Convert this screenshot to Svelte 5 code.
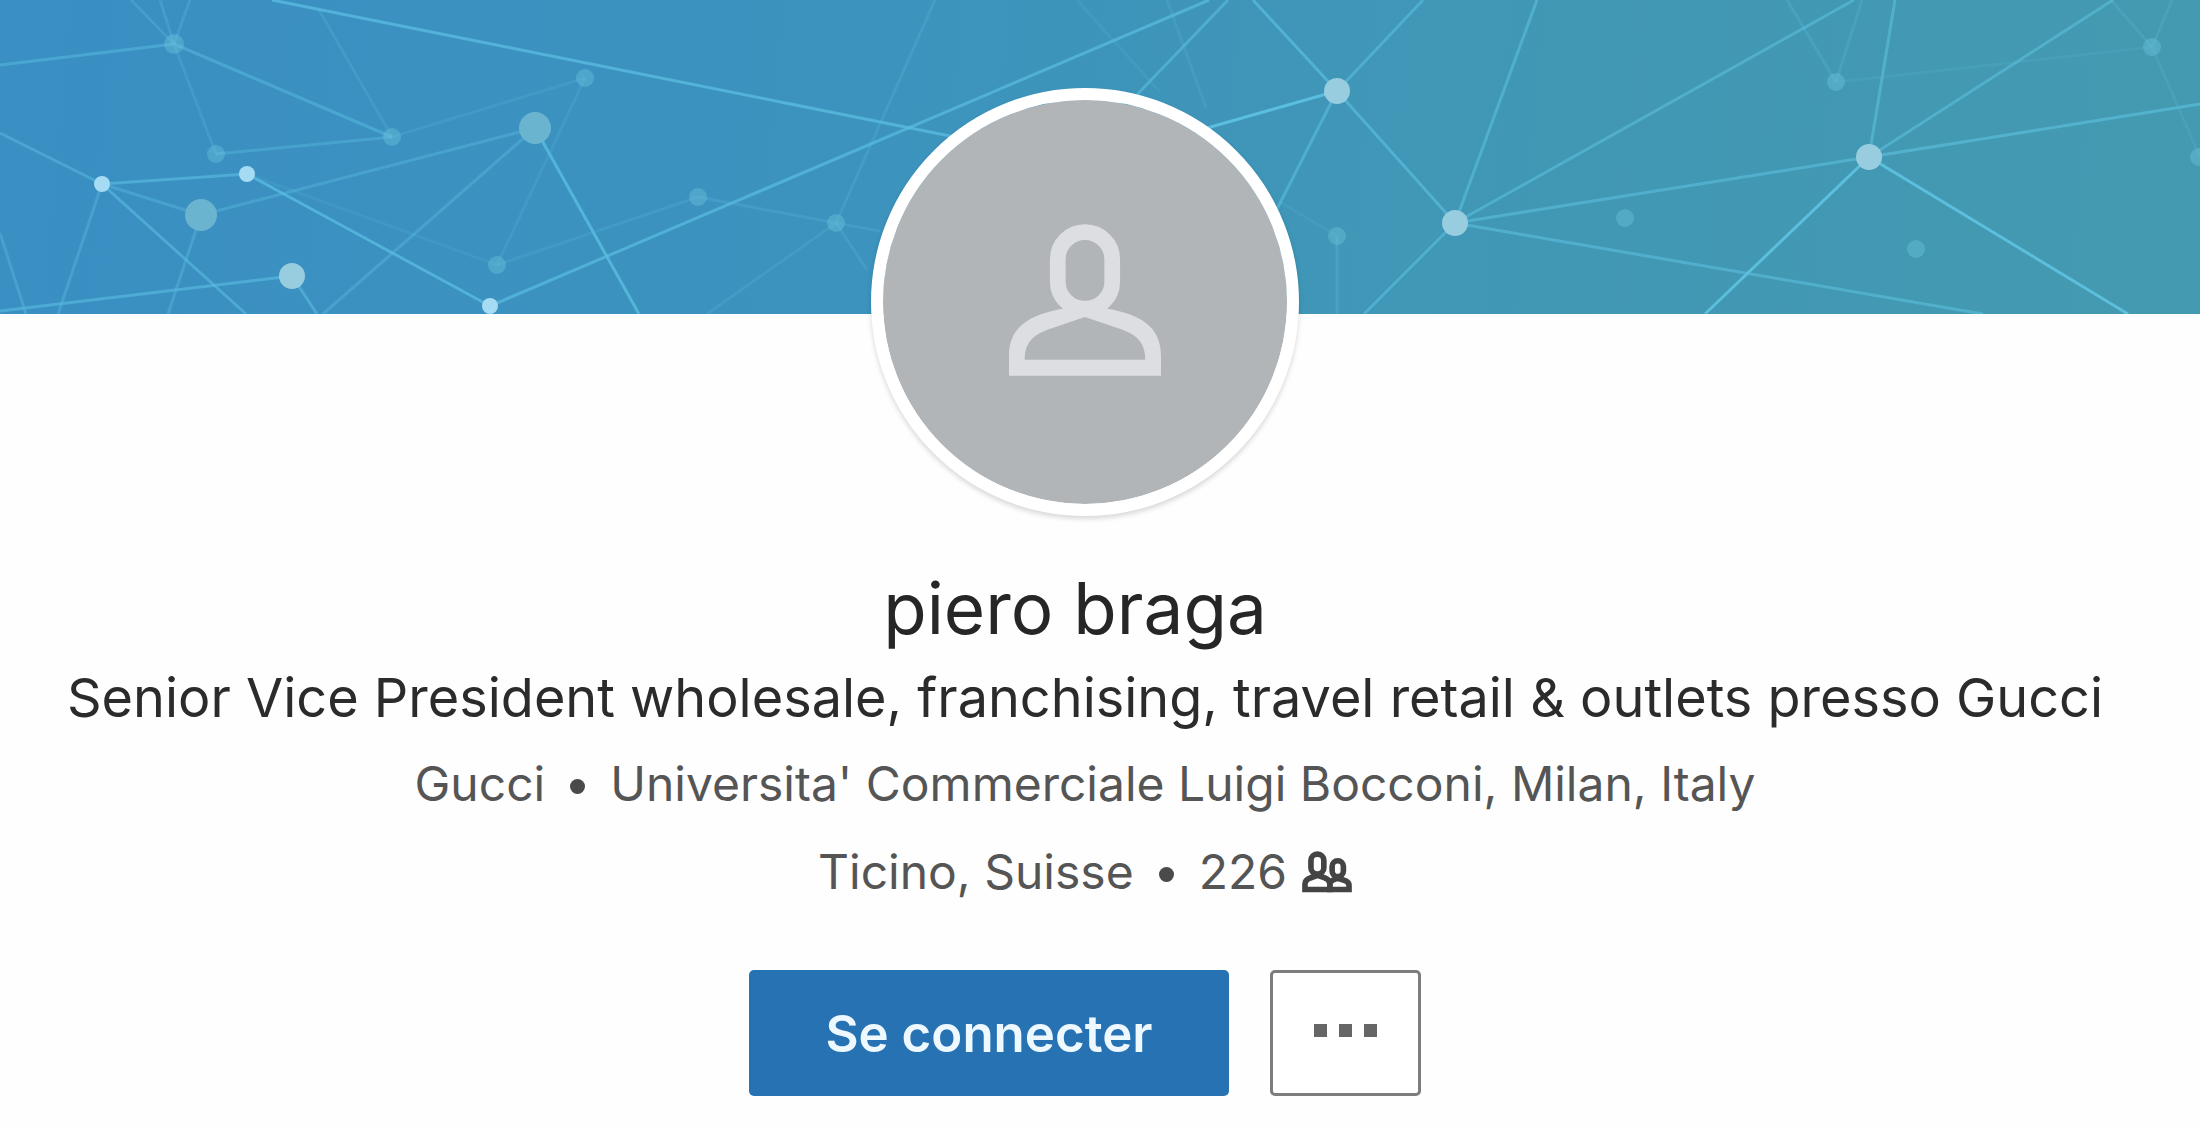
<script>
    const profile = {
        name: "piero braga",
        headline:
            "Senior Vice President wholesale, franchising, travel retail & outlets presso Gucci",
        company: "Gucci",
        school: "Universita' Commerciale Luigi Bocconi, Milan, Italy",
        location: "Ticino, Suisse",
        connections: 226,
    };

    // x1, y1, x2, y2, opacity
    const lines = [
        [0, 65, 174, 44, 0.5],
        [131, 0, 174, 44, 0.3],
        [160, 0, 174, 44, 0.3],
        [190, 0, 174, 44, 0.3],
        [174, 44, 216, 154, 0.25],
        [174, 44, 392, 137, 0.5],
        [216, 154, 392, 137, 0.4],
        [319, 10, 392, 137, 0.25],
        [392, 137, 585, 78, 0.2],
        [272, 0, 960, 138, 0.75],
        [0, 133, 102, 184, 0.5],
        [102, 184, 247, 174, 0.6],
        [102, 184, 201, 215, 0.4],
        [102, 184, 58, 314, 0.4],
        [102, 184, 246, 314, 0.6],
        [201, 215, 535, 128, 0.4],
        [201, 215, 168, 314, 0.4],
        [0, 311, 292, 276, 0.6],
        [292, 276, 317, 314, 0.6],
        [535, 128, 323, 314, 0.4],
        [535, 128, 639, 314, 0.8],
        [247, 174, 490, 306, 0.75],
        [247, 174, 497, 265, 0.15],
        [585, 78, 497, 265, 0.2],
        [497, 265, 698, 197, 0.2],
        [698, 197, 836, 223, 0.25],
        [836, 223, 880, 231, 0.25],
        [836, 223, 707, 314, 0.2],
        [836, 223, 867, 270, 0.25],
        [836, 223, 935, 0, 0.25],
        [490, 306, 1209, 0, 0.7],
        [0, 233, 26, 314, 0.4],
        [1228, 0, 1130, 102, 0.6],
        [1077, 0, 1160, 92, 0.15],
        [1167, 0, 1206, 108, 0.2],
        [1253, 0, 1337, 91, 0.7],
        [1423, 0, 1337, 91, 0.6],
        [1200, 130, 1337, 91, 1],
        [1275, 213, 1337, 91, 0.6],
        [1337, 91, 1455, 223, 0.65],
        [1455, 223, 1537, 0, 0.6],
        [1455, 223, 1854, 0, 0.6],
        [1455, 223, 1869, 157, 0.6],
        [1455, 223, 1983, 314, 0.6],
        [1455, 223, 1364, 314, 0.6],
        [1337, 236, 1337, 314, 0.3],
        [1337, 236, 1280, 202, 0.15],
        [1869, 157, 1895, 0, 0.6],
        [1869, 157, 2113, 0, 0.6],
        [1869, 157, 2200, 104, 0.65],
        [1869, 157, 1705, 314, 1],
        [1869, 157, 2128, 314, 1],
        [1836, 82, 1787, 0, 0.25],
        [1836, 82, 1862, 0, 0.25],
        [1836, 82, 2152, 47, 0.15],
        [2152, 47, 2111, 0, 0.25],
        [2152, 47, 2172, 0, 0.25],
        [2152, 47, 2200, 157, 0.2],
    ];

    // x, y, radius, tone
    const nodes = [
        [174, 44, 10, "faint"],
        [392, 137, 9, "faint"],
        [216, 154, 9, "faint"],
        [497, 265, 9, "faint"],
        [585, 78, 9, "faint"],
        [698, 197, 9, "faint"],
        [836, 223, 9, "faint"],
        [1337, 236, 9, "faint"],
        [1625, 218, 9, "faint"],
        [1836, 82, 9, "faint"],
        [1916, 249, 9, "faint"],
        [2152, 47, 9, "faint"],
        [2199, 157, 9, "faint"],
        [201, 215, 16, "mid"],
        [535, 128, 16, "mid"],
        [102, 184, 8, "bright"],
        [247, 174, 8, "bright"],
        [490, 306, 8, "bright"],
        [292, 276, 13, "light"],
        [1337, 91, 13, "light"],
        [1455, 223, 13, "light"],
        [1869, 157, 13, "light"],
    ];
</script>

<main class="card">
    <div class="banner">
        <svg viewBox="0 0 2200 314" preserveAspectRatio="xMidYMid slice" aria-hidden="true">
            <g class="links">
                {#each lines as [x1, y1, x2, y2, opacity]}
                    <line {x1} {y1} {x2} {y2} {opacity} />
                {/each}
            </g>
            {#each nodes as [cx, cy, r, tone]}
                <circle {cx} {cy} {r} class={tone} />
            {/each}
        </svg>
    </div>

    <div class="content">
        <div class="avatar">
            <svg viewBox="445 430 455 454" aria-hidden="true">
                <rect x="591" y="454" width="163" height="229" rx="81" />
                <path
                    d="M445 884V824C445 738 504 702 604 683L640 664H706L742 683C842 702 900 738 900 824V884ZM492 836H853C853 790 833 764 785 746L672 708L560 746C512 764 492 790 492 836Z"
                />
            </svg>
        </div>

        <h1>{profile.name}&nbsp;</h1>
        <h2>{profile.headline}</h2>
        <p class="meta">
            <span>{profile.company}</span>
            <span class="dot"></span>
            <span>{profile.school}</span>
        </p>
        <p class="meta">
            <span>{profile.location}</span>
            <span class="dot"></span>
            <span>{profile.connections}</span>
            <svg class="people" viewBox="65 80 151 126" aria-hidden="true">
                <rect x="92" y="89" width="39" height="60" rx="19" />
                <rect x="156" y="109" width="34" height="48" rx="17" />
                <path d="M74 196V180Q74 166 90 161L112 153L134 161Q149 166 149 180V196Z" />
                <path d="M149 196V176Q153 168 173 162L192 168Q207 172 207 184V196Z" />
            </svg>
        </p>

        <div class="actions">
            <button class="connect">Se connecter</button>
            <button class="more" aria-label="Plus">
                <i></i><i></i><i></i>
            </button>
        </div>
    </div>
</main>

<style>
    :global(body) {
        margin: 0;
        background: #fefefe;
    }

    .card {
        font-family: Inter, "Liberation Sans", sans-serif;
        color: #262626;
    }

    .banner {
        height: 314px;
        background: linear-gradient(95deg, #3a8fc3 0%, #3c93bd 40%, #4097b6 65%, #449ab0 100%);
    }

    .banner svg {
        display: block;
        width: 100%;
        height: 100%;
    }

    .links {
        opacity: 0.8;
    }

    .banner line {
        stroke: #63c8e8;
        stroke-width: 3;
    }

    .faint {
        fill: #6cc4dc;
        opacity: 0.42;
    }
    .mid {
        fill: #6ab4d0;
    }
    .light {
        fill: #98cde0;
    }
    .bright {
        fill: #a5dcf3;
    }

    .content {
        display: flex;
        flex-direction: column;
        align-items: center;
        padding-right: 30px;
        margin-top: -226px;
    }

    .avatar {
        display: flex;
        align-items: center;
        justify-content: center;
        width: 404px;
        height: 404px;
        box-sizing: content-box;
        border: 12px solid #fff;
        border-radius: 50%;
        background: #b1b5b8;
        background-clip: padding-box;
        box-shadow: 0 3px 5px rgba(0, 0, 0, 0.15);
    }

    .avatar svg {
        width: 152px;
        height: 152px;
        padding-bottom: 4px;
        fill: #dddee1;
    }

    .avatar rect {
        fill: none;
        stroke: #dddee1;
        stroke-width: 47;
    }

    h1,
    h2,
    p {
        margin: 0;
        font-weight: 400;
        text-align: center;
    }

    h1 {
        margin-top: 48px;
        font-size: 71px;
        line-height: 88px;
    }

    h2 {
        margin-top: 4px;
        font-size: 54px;
        line-height: 84px;
        color: #2b2b2b;
    }

    .meta {
        display: flex;
        align-items: center;
        justify-content: center;
        font-size: 48px;
        line-height: 88px;
        color: #555;
    }

    .dot {
        width: 15px;
        height: 15px;
        margin: 4px 25px 0;
        border-radius: 50%;
        background: #4a4a4a;
    }

    .people {
        width: 50px;
        height: 42px;
        margin-left: 15px;
        fill: none;
        stroke: #444;
        stroke-width: 17;
    }

    .actions {
        display: flex;
        gap: 41px;
        margin-top: 54px;
    }

    button {
        height: 126px;
        border-radius: 5px;
        font-family: inherit;
        cursor: pointer;
    }

    .connect {
        padding: 0 76px;
        border: none;
        background: #2672b2;
        color: #eef8ff;
        font-size: 51px;
        font-weight: 600;
    }

    .more {
        display: flex;
        align-items: center;
        justify-content: center;
        gap: 12px;
        width: 151px;
        padding: 0 0 6px;
        border: 3px solid #7d7d7d;
        background: #fff;
    }

    .more i {
        width: 13px;
        height: 13px;
        background: #666;
    }
</style>
